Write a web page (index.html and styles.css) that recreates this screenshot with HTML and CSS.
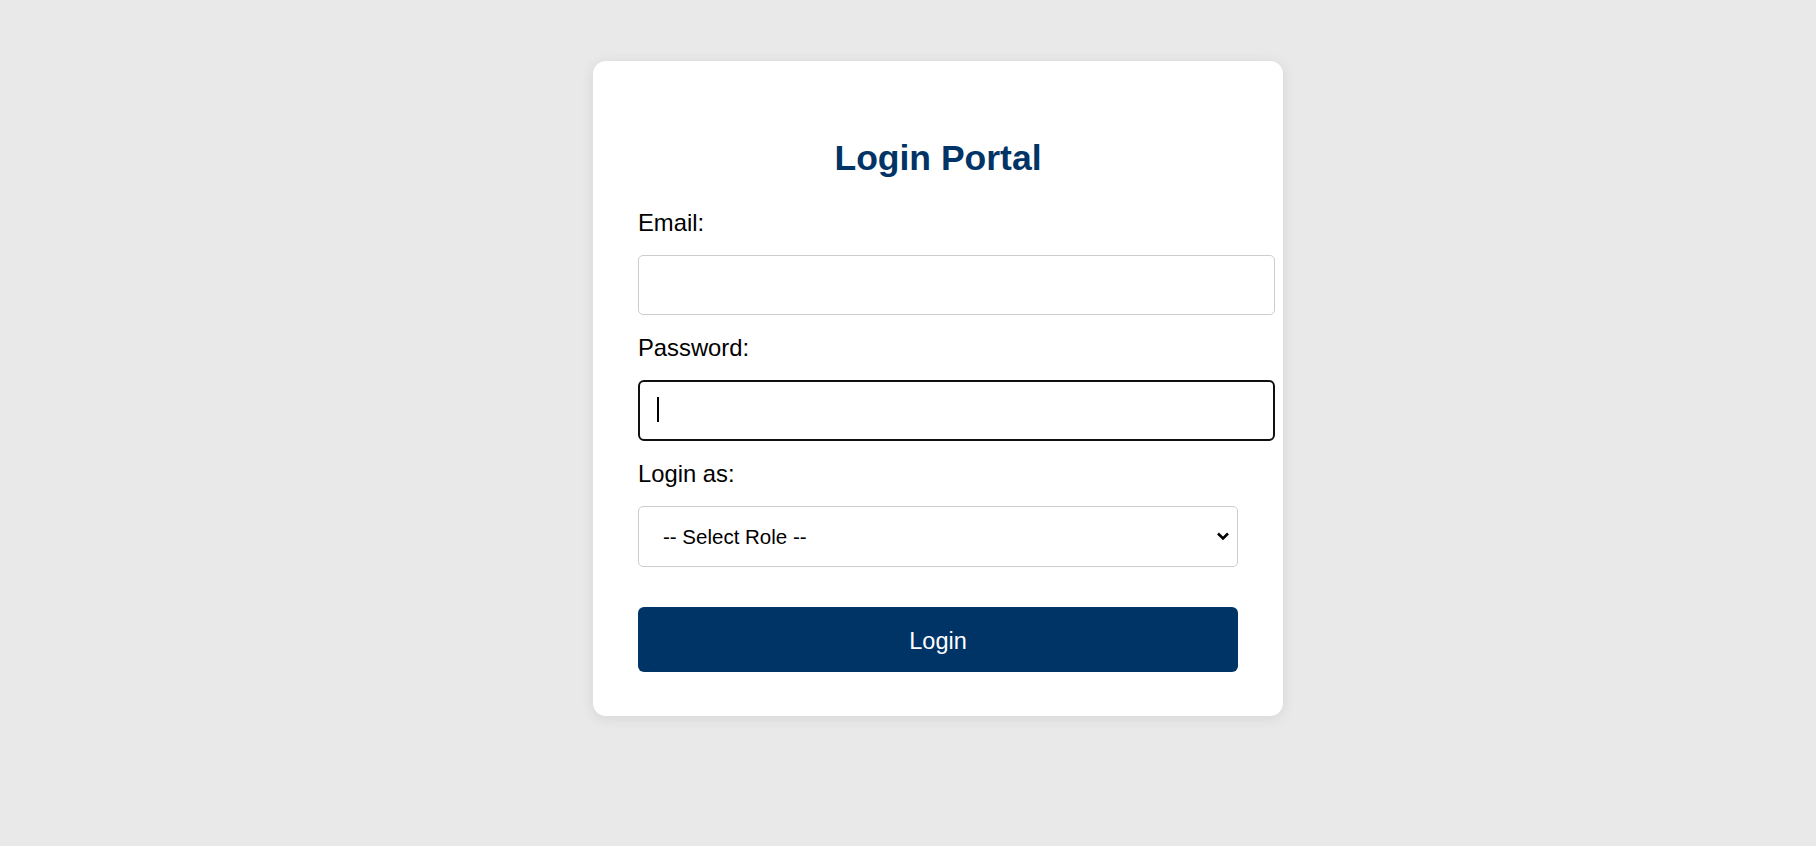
FILE: index.html
```html
<!DOCTYPE html>
<html lang="en">
<head>
<meta charset="utf-8">
<title>Login Portal</title>
<link rel="stylesheet" href="styles.css">
</head>
<body>
  <div class="card">
    <h2 class="title">Login Portal</h2>
    <form class="form">
      <label class="label" for="email">Email:</label>
      <input class="input" type="email" id="email">
      <label class="label" for="password">Password:</label>
      <div class="input-wrap">
        <input class="input input-focus" type="password" id="password">
        <span class="caret"></span>
      </div>
      <label class="label" for="role">Login as:</label>
      <select class="select" id="role">
        <option>-- Select Role --</option>
        <option>Student</option>
        <option>Teacher</option>
        <option>Admin</option>
      </select>
      <button class="button" type="button">Login</button>
    </form>
  </div>
</body>
</html>
```
FILE: styles.css
```css
html, body {
  margin: 0;
  padding: 0;
}
body {
  background: #e9e9e9;
  font-family: "Liberation Sans", Arial, sans-serif;
  color: #000;
  min-height: 846px;
}
.card {
  box-sizing: border-box;
  width: 690px;
  margin: 61px 0 0 calc(50% - 315px);
  padding: 46px 45px 44px;
  background: #fff;
  border-radius: 13px;
  box-shadow: 0 2px 14px rgba(0, 0, 0, 0.09);
}
.title {
  margin: 32px 0 31px;
  text-align: center;
  color: #003366;
  font-size: 35.5px;
  line-height: 39.7px;
  font-weight: bold;
}
.form {
  margin: 0;
}
.label {
  display: block;
  font-size: 23.8px;
  line-height: 26.4px;
  margin-bottom: 18.4px;
}
.input {
  display: block;
  box-sizing: border-box;
  width: 637px;
  height: 60.5px;
  margin: 0 0 20.3px;
  padding: 0 17px;
  border: 1px solid #ccc;
  border-radius: 5px;
  font-family: inherit;
  font-size: 20.7px;
  background: #fff;
  outline: none;
}
.input-wrap {
  position: relative;
}
.input-focus {
  border: 2px solid #101010;
  border-radius: 6px;
  box-shadow: 0 0 0 1px #fff inset;
}
.caret {
  position: absolute;
  left: 19px;
  top: 17px;
  width: 2px;
  height: 25px;
  background: #000;
}
.select {
  display: block;
  box-sizing: border-box;
  width: 600px;
  height: 61.5px;
  margin: 0;
  padding: 0 40px 0 24px;
  border: 1px solid #ccc;
  border-radius: 5px;
  font-family: inherit;
  font-size: 20.5px;
  color: #000;
  -webkit-appearance: none;
  appearance: none;
  background: #fff url("data:image/svg+xml;utf8,<svg xmlns='http://www.w3.org/2000/svg' width='14' height='10' viewBox='0 0 14 10'><path d='M2 2.5 L7 7.5 L12 2.5' fill='none' stroke='black' stroke-width='2.6'/></svg>") no-repeat right 7px center;
}
.button {
  display: block;
  box-sizing: border-box;
  width: 600px;
  height: 65px;
  margin-top: 40px;
  padding: 3px 0 0;
  border: none;
  border-radius: 6px;
  background: #003366;
  color: #fff;
  font-family: inherit;
  font-size: 23.5px;
  cursor: pointer;
}
```
